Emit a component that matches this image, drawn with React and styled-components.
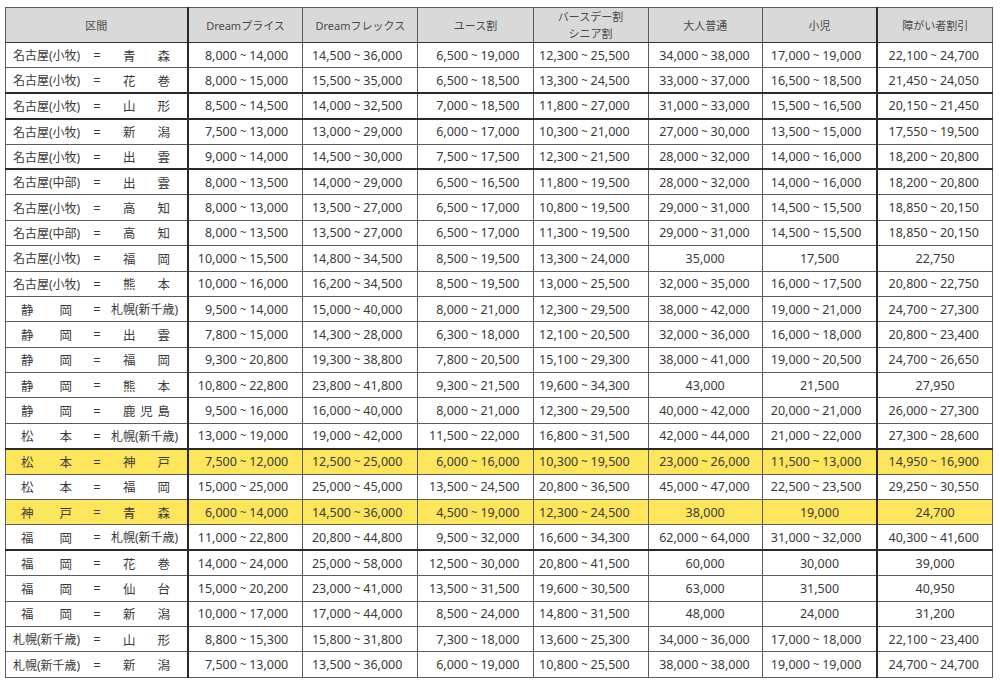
import React from "react";
import styled, { createGlobalStyle } from "styled-components";

const GlobalStyle = createGlobalStyle`
  html, body {
    margin: 0;
    padding: 0;
    background: #fff;
  }
  body {
    padding: 7px 0 0 5px;
    font-family: "Noto Sans", "Noto Sans CJK JP", sans-serif;
    color: #3a3a3a;
  }
`;

const headers = [
	["区間"],
	["Dreamプライス"],
	["Dreamフレックス"],
	["ユース割"],
	["バースデー割", "シニア割"],
	["大人普通"],
	["小児"],
	["障がい者割引"],
];

// right padding of each price column, taken from the sheet
const pads = [14, 15, 13, 18, 12, 15, 13];

const rows = [
	["名古屋(小牧)", "青森", ["8,000 ~ 14,000", "14,500 ~ 36,000", "6,500 ~ 19,000", "12,300 ~ 25,500", "34,000 ~ 38,000", "17,000 ~ 19,000", "22,100 ~ 24,700"]],
	["名古屋(小牧)", "花巻", ["8,000 ~ 15,000", "15,500 ~ 35,000", "6,500 ~ 18,500", "13,300 ~ 24,500", "33,000 ~ 37,000", "16,500 ~ 18,500", "21,450 ~ 24,050"], { thick: true }],
	["名古屋(小牧)", "山形", ["8,500 ~ 14,500", "14,000 ~ 32,500", "7,000 ~ 18,500", "11,800 ~ 27,000", "31,000 ~ 33,000", "15,500 ~ 16,500", "20,150 ~ 21,450"], { thick: true }],
	["名古屋(小牧)", "新潟", ["7,500 ~ 13,000", "13,000 ~ 29,000", "6,000 ~ 17,000", "10,300 ~ 21,000", "27,000 ~ 30,000", "13,500 ~ 15,000", "17,550 ~ 19,500"]],
	["名古屋(小牧)", "出雲", ["9,000 ~ 14,000", "14,500 ~ 30,000", "7,500 ~ 17,500", "12,300 ~ 21,500", "28,000 ~ 32,000", "14,000 ~ 16,000", "18,200 ~ 20,800"], { thick: true }],
	["名古屋(中部)", "出雲", ["8,000 ~ 13,500", "14,000 ~ 29,000", "6,500 ~ 16,500", "11,800 ~ 19,500", "28,000 ~ 32,000", "14,000 ~ 16,000", "18,200 ~ 20,800"]],
	["名古屋(小牧)", "高知", ["8,000 ~ 13,000", "13,500 ~ 27,000", "6,500 ~ 17,000", "10,800 ~ 19,500", "29,000 ~ 31,000", "14,500 ~ 15,500", "18,850 ~ 20,150"]],
	["名古屋(中部)", "高知", ["8,000 ~ 13,500", "13,500 ~ 27,000", "6,500 ~ 17,000", "11,300 ~ 19,500", "29,000 ~ 31,000", "14,500 ~ 15,500", "18,850 ~ 20,150"]],
	["名古屋(小牧)", "福岡", ["10,000 ~ 15,500", "14,800 ~ 34,500", "8,500 ~ 19,500", "13,300 ~ 24,000", "35,000", "17,500", "22,750"]],
	["名古屋(小牧)", "熊本", ["10,000 ~ 16,000", "16,200 ~ 34,500", "8,500 ~ 19,500", "13,000 ~ 25,500", "32,000 ~ 35,000", "16,000 ~ 17,500", "20,800 ~ 22,750"]],
	["静岡", "札幌(新千歳)", ["9,500 ~ 14,000", "15,000 ~ 40,000", "8,000 ~ 21,000", "12,300 ~ 29,500", "38,000 ~ 42,000", "19,000 ~ 21,000", "24,700 ~ 27,300"]],
	["静岡", "出雲", ["7,800 ~ 15,000", "14,300 ~ 28,000", "6,300 ~ 18,000", "12,100 ~ 20,500", "32,000 ~ 36,000", "16,000 ~ 18,000", "20,800 ~ 23,400"]],
	["静岡", "福岡", ["9,300 ~ 20,800", "19,300 ~ 38,800", "7,800 ~ 20,500", "15,100 ~ 29,300", "38,000 ~ 41,000", "19,000 ~ 20,500", "24,700 ~ 26,650"]],
	["静岡", "熊本", ["10,800 ~ 22,800", "23,800 ~ 41,800", "9,300 ~ 21,500", "19,600 ~ 34,300", "43,000", "21,500", "27,950"]],
	["静岡", "鹿児島", ["9,500 ~ 16,000", "16,000 ~ 40,000", "8,000 ~ 21,000", "12,300 ~ 29,500", "40,000 ~ 42,000", "20,000 ~ 21,000", "26,000 ~ 27,300"]],
	["松本", "札幌(新千歳)", ["13,000 ~ 19,000", "19,000 ~ 42,000", "11,500 ~ 22,000", "16,800 ~ 31,500", "42,000 ~ 44,000", "21,000 ~ 22,000", "27,300 ~ 28,600"], { thick: true }],
	["松本", "神戸", ["7,500 ~ 12,000", "12,500 ~ 25,000", "6,000 ~ 16,000", "10,300 ~ 19,500", "23,000 ~ 26,000", "11,500 ~ 13,000", "14,950 ~ 16,900"], { marked: true }],
	["松本", "福岡", ["15,000 ~ 25,000", "25,000 ~ 45,000", "13,500 ~ 24,500", "20,800 ~ 36,500", "45,000 ~ 47,000", "22,500 ~ 23,500", "29,250 ~ 30,550"]],
	["神戸", "青森", ["6,000 ~ 14,000", "14,500 ~ 36,000", "4,500 ~ 19,000", "12,300 ~ 24,500", "38,000", "19,000", "24,700"], { marked: true }],
	["福岡", "札幌(新千歳)", ["11,000 ~ 22,800", "20,800 ~ 44,800", "9,500 ~ 32,000", "16,600 ~ 34,300", "62,000 ~ 64,000", "31,000 ~ 32,000", "40,300 ~ 41,600"], { thick: true }],
	["福岡", "花巻", ["14,000 ~ 24,000", "25,000 ~ 58,000", "12,500 ~ 30,000", "20,800 ~ 41,500", "60,000", "30,000", "39,000"]],
	["福岡", "仙台", ["15,000 ~ 20,200", "23,000 ~ 41,000", "13,500 ~ 31,500", "19,600 ~ 30,500", "63,000", "31,500", "40,950"]],
	["福岡", "新潟", ["10,000 ~ 17,000", "17,000 ~ 44,000", "8,500 ~ 24,000", "14,800 ~ 31,500", "48,000", "24,000", "31,200"]],
	["札幌(新千歳)", "山形", ["8,800 ~ 15,300", "15,800 ~ 31,800", "7,300 ~ 18,000", "13,600 ~ 25,300", "34,000 ~ 36,000", "17,000 ~ 18,000", "22,100 ~ 23,400"]],
	["札幌(新千歳)", "新潟", ["7,500 ~ 13,000", "13,500 ~ 36,000", "6,000 ~ 19,000", "10,800 ~ 25,500", "38,000 ~ 38,000", "19,000 ~ 19,000", "24,700 ~ 24,700"]],
];

function Place({ name, side }) {
	// short names are spread over the whole slot, long ones written as is
	if (name.length <= 3) {
		return (
			<Spread $side={side}>
				{name.split("").map((ch, i) => (
					<span key={i}>{ch}</span>
				))}
			</Spread>
		);
	}
	return <Plain>{name}</Plain>;
}

function Price({ value }) {
	const parts = value.split(" ~ ");
	if (parts.length === 1) return value;
	return (
		<>
			{parts[0]}
			<Tilde>~</Tilde>
			{parts[1]}
		</>
	);
}

export default function App() {
	return (
		<>
			<GlobalStyle />
			<FareTable>
				<colgroup>
					<col style={{ width: 182 }} />
					{pads.map((_, i) => (
						<col key={i} style={{ width: i === 4 ? 114 : 115 }} />
					))}
				</colgroup>
				<thead>
					<tr>
						{headers.map((lines, i) => (
							<HeadCell key={i}>
								{lines.map((l) => (
									<div key={l}>{l}</div>
								))}
							</HeadCell>
						))}
					</tr>
				</thead>
				<tbody>
					{rows.map(([from, to, prices, flags = {}], r) => (
						<Row key={r} $marked={flags.marked} $thick={flags.thick}>
							<RouteCell>
								<Route>
									<Slot $w={70}>
										<Place name={from} side="from" />
									</Slot>
									<Equal>=</Equal>
									<Slot $w={70}>
										<Place name={to} side="to" />
									</Slot>
								</Route>
							</RouteCell>
							{prices.map((p, c) => {
								const single = !p.includes("~");
								return (
									<PriceCell key={c} $pad={pads[c]} $single={single}>
										<Price value={p} />
									</PriceCell>
								);
							})}
						</Row>
					))}
				</tbody>
			</FareTable>
		</>
	);
}

const FareTable = styled.table`
	border-collapse: collapse;
	table-layout: fixed;
	width: 988px;
	font-size: 12.5px;
	border: 1.5px solid #2a2a2a;

	td, th {
		border: 1px solid #5c5c5c;
		padding: 0;
	}
	col:first-child + col {
		border-left: 2px solid #2a2a2a;
	}
	col:nth-child(8) {
		border-left: 2px solid #2a2a2a;
	}
`;

const HeadCell = styled.th`
	height: 34px;
	background: #d9d9d9;
	font-weight: 400;
	font-size: 11px;
	color: #4a4a4a;
	text-align: center;
	line-height: 17px;
	border-bottom: 1.5px solid #333 !important;
`;

const Row = styled.tr`
	height: 25.4px;
	background: ${(p) => (p.$marked ? "#fde55c" : "#fff")};

	td {
		border-bottom: ${(p) => (p.$thick ? "2px solid #2a2a2a" : "1px solid #5c5c5c")};
	}
`;

const RouteCell = styled.td`
	padding: 0;
`;

const Route = styled.div`
	display: flex;
	align-items: center;
	padding-left: 7px;
	white-space: nowrap;
`;

const Slot = styled.div`
	width: ${(p) => p.$w}px;
	display: flex;
`;

const Spread = styled.div`
	flex: 1;
	display: flex;
	justify-content: space-between;
	padding: ${(p) => (p.$side === "from" ? "0 11px 0 8px" : "0 11px 0 12px")};
`;

const Plain = styled.span`
	display: block;
	font-size: 12px;
`;

const Equal = styled.span`
	width: 28px;
	text-align: center;
	font-size: 13px;
`;

const PriceCell = styled.td`
	text-align: ${(p) => (p.$single ? "center" : "right")};
	padding-right: ${(p) => (p.$single ? 0 : p.$pad)}px !important;
	white-space: nowrap;
	font-size: 12.5px;
`;

const Tilde = styled.span`
	display: inline-block;
	margin: 0 3px;
	font-size: 11px;
	position: relative;
	top: -1px;
`;
